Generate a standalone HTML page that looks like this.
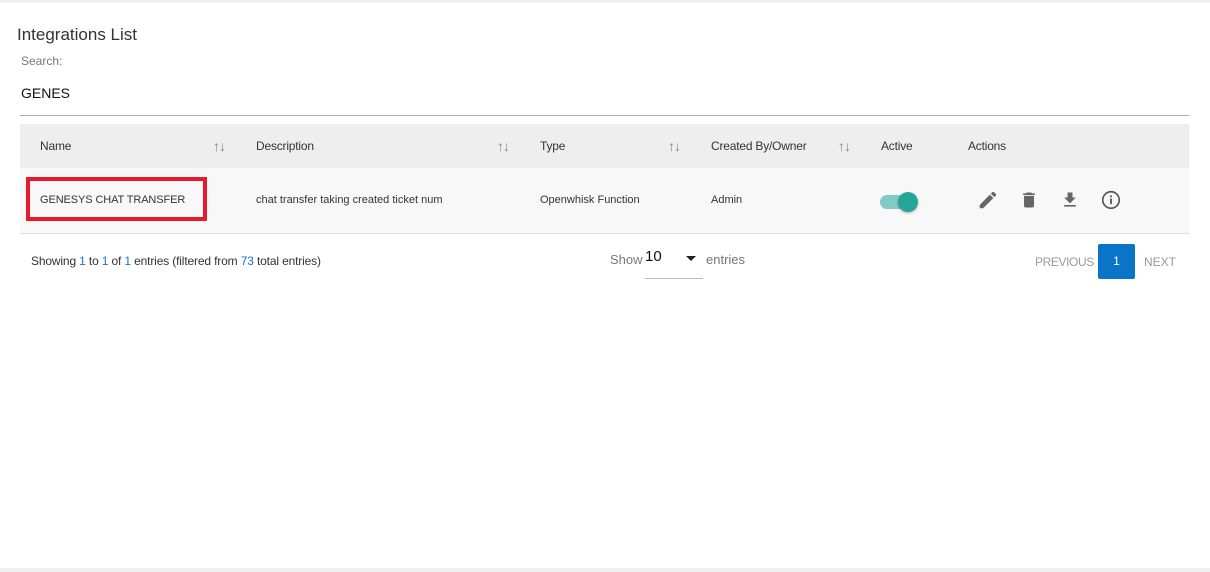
<!DOCTYPE html>
<html><head><style>
body{margin:0;width:1210px;height:572px;background:#fff;font-family:"Liberation Sans",sans-serif;position:relative;overflow:hidden;color:#333}
.a{position:absolute;white-space:nowrap}
.h{font-size:12px;color:#333;top:139px;letter-spacing:-0.2px}
.s{font-size:14px;color:#888;top:138px;letter-spacing:-1px}
.c{font-size:11px;color:#333;top:194px}
</style></head><body>
<div class="a" style="left:0;top:0;width:1210px;height:3px;background:#eef0f3"></div>
<div class="a" style="left:0;top:568px;width:1210px;height:4px;background:#eef0f3"></div>
<div class="a" style="left:17px;top:25px;font-size:17px;color:#333">Integrations List</div>
<div class="a" style="left:21px;top:54px;font-size:12px;color:#777">Search:</div>
<div class="a" style="left:21px;top:85px;font-size:14px;color:#111">GENES</div>
<div class="a" style="left:20px;top:115px;width:1169px;height:1px;background:#aaa"></div>
<div class="a" style="left:20px;top:124px;width:1169px;height:44px;background:#eee"></div>
<div class="a" style="left:20px;top:168px;width:1169px;height:65px;background:#f8f8f8;border-bottom:1px solid #ddd"></div>
<div class="a h" style="left:40px">Name</div><div class="a s" style="left:213px">↑↓</div>
<div class="a h" style="left:256px">Description</div><div class="a s" style="left:497px">↑↓</div>
<div class="a h" style="left:540px">Type</div><div class="a s" style="left:668px">↑↓</div>
<div class="a h" style="left:711px">Created By/Owner</div><div class="a s" style="left:838px">↑↓</div>
<div class="a h" style="left:881px">Active</div>
<div class="a h" style="left:968px">Actions</div>
<div class="a" style="left:26px;top:177px;width:173px;height:36px;border:4px solid #e8192c"></div>
<div class="a c" style="left:40px;letter-spacing:-0.1px">GENESYS CHAT TRANSFER</div>
<div class="a c" style="left:256px">chat transfer taking created ticket num</div>
<div class="a c" style="left:540px">Openwhisk Function</div>
<div class="a c" style="left:711px">Admin</div>
<div class="a" style="left:880px;top:195px;width:34px;height:14px;border-radius:7px;background:#80cbc4"></div>
<div class="a" style="left:898px;top:192px;width:20px;height:20px;border-radius:50%;background:#26a69a;box-shadow:0 1px 2px rgba(0,0,0,.3)"></div>
<svg class="a" style="left:977px;top:189px" width="22" height="22" viewBox="0 0 24 24"><path fill="#666" d="M3 17.25V21h3.75L17.8 9.94l-3.75-3.75L3 17.25zM20.7 7.04a1 1 0 000-1.41l-2.34-2.34a1 1 0 00-1.41 0l-1.83 1.83 3.75 3.75 1.83-1.83z"/></svg>
<svg class="a" style="left:1019px;top:190px" width="20" height="20" viewBox="0 0 24 24"><path fill="#666" d="M6 19c0 1.1.9 2 2 2h8c1.1 0 2-.9 2-2V7H6v12zM19 4h-3.5l-1-1h-5l-1 1H5v2h14V4z"/></svg>
<svg class="a" style="left:1060px;top:190px" width="20" height="20" viewBox="0 0 24 24"><path fill="#666" d="M19 9h-4V3H9v6H5l7 7 7-7zM5 18v2h14v-2H5z"/></svg>
<svg class="a" style="left:1100px;top:189px" width="22" height="22" viewBox="0 0 24 24"><circle cx="12" cy="12" r="9" fill="none" stroke="#555" stroke-width="1.8"/><rect x="11" y="10.5" width="2" height="6" fill="#555"/><rect x="11" y="7" width="2" height="2" fill="#555"/></svg>
<div class="a" style="left:31px;top:254px;font-size:12px;color:#333;letter-spacing:-0.15px">Showing <span style="color:#1976d2">1</span> to <span style="color:#1976d2">1</span> of <span style="color:#1976d2">1</span> entries (filtered from <span style="color:#1976d2">73</span> total entries)</div>
<div class="a" style="left:610px;top:252px;font-size:13px;color:#777">Show</div>
<div class="a" style="left:645px;top:248px;font-size:15px;color:#111">10</div>
<div class="a" style="left:686px;top:256px;width:0;height:0;border-left:5px solid transparent;border-right:5px solid transparent;border-top:5px solid #222"></div>
<div class="a" style="left:706px;top:252px;font-size:13px;color:#777">entries</div>
<div class="a" style="left:645px;top:278px;width:58px;height:1px;background:#bbb"></div>
<div class="a" style="left:1035px;top:255px;font-size:12px;color:#999;letter-spacing:-0.4px">PREVIOUS</div>
<div class="a" style="left:1098px;top:244px;width:37px;height:35px;background:#0a74c8;border-radius:2px;color:#fff;font-size:12px;text-align:center;line-height:35px">1</div>
<div class="a" style="left:1144px;top:255px;font-size:12px;color:#999">NEXT</div>
</body></html>
